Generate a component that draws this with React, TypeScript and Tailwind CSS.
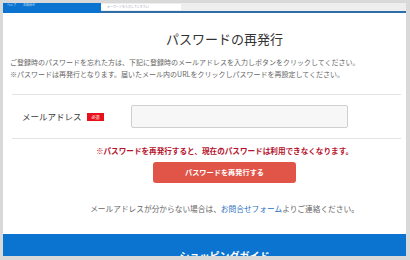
import React from "react";

const blue = "bg-[#0a74d0]";

const App: React.FC = () => {
  return (
    <div
      className="w-[410px] h-[260px] bg-[#d9d9d9] pt-[3px] pl-[3px] pr-[4px] pb-[4px]"
      style={{ fontFamily: '"Noto Sans CJK JP", "Noto Sans", sans-serif' }}
    >
      <div className="flex flex-col h-full bg-white overflow-hidden">
        {/* top bar */}
        <div className="flex h-[10px] shrink-0">
          <div className={`${blue} w-[98px] shrink-0 h-full flex items-start gap-[7px] pl-[4px] text-[3px] leading-[5px] text-white/80`}>
            <span>ヘルプ</span>
            <span>お問合せ</span>
          </div>
          <div className="flex-1 flex flex-col">
            <div className="h-[8px] bg-[#eeeeee] flex items-center">
              <div className="w-[80px] h-[6px] bg-white text-[3px] leading-[6px] text-gray-400 pl-[6px]">
                キーワードを入力してください
              </div>
            </div>
            <div className="h-[2px] bg-[#2d6ea8]" />
          </div>
        </div>

        {/* content */}
        <div className="flex-1 flex flex-col">
          <div className="pl-[40px] mt-[18px] text-center text-[13px] leading-[16px] text-[#333]">
            パスワードの再発行
          </div>
          <div className="pl-[7px] mt-[10px] text-[7px] leading-[11.5px] text-[#666]">
            <p>ご登録時のパスワードを忘れた方は、下記に登録時のメールアドレスを入力しボタンをクリックしてください。</p>
            <p>※パスワードは再発行となります。届いたメール内のURLをクリックしパスワードを再設定してください。</p>
          </div>

          <div className="ml-[9px] mr-[5px] mt-[14px] border-t border-[#e4e4e4]" />
          <div className="flex items-center h-[43px] pl-[19px]">
            <span className="text-[8.5px] text-[#3a3a3a] w-[65px]">メールアドレス</span>
            <span className="bg-[#e8101a] text-white text-[4px] leading-[8px] w-[17px] text-center">必須</span>
            <div className="ml-[27px] w-[217px] h-[23px] bg-[#f7f7f7] border border-[#cfcfcf] rounded-[2px]" />
          </div>
          <div className="ml-[9px] mr-[5px] border-t border-[#e4e4e4]" />

          <div className="pl-[40px] flex flex-col items-center">
            <p className="mt-[7px] text-[7.6px] leading-[10px] font-bold text-[#b5122c]">
              ※パスワードを再発行すると、現在のパスワードは利用できなくなります。
            </p>
            <button className="mt-[6px] w-[143px] h-[21px] rounded-[3px] bg-[#e05548] text-white text-[7.2px] font-bold">
              パスワードを再発行する
            </button>
            <p className="mt-[21px] text-[7.7px] leading-[10px] text-[#666]">
              メールアドレスが分からない場合は、<span className="text-[#2a6fc0]">お問合せフォーム</span>よりご連絡ください。
            </p>
          </div>
        </div>

        {/* footer */}
        <div className={`${blue} h-[22px] shrink-0 pl-[40px] text-center text-white font-bold text-[10px] leading-[12px] pt-[16px]`}>
          ショッピングガイド
        </div>
      </div>
    </div>
  );
};

export default App;
